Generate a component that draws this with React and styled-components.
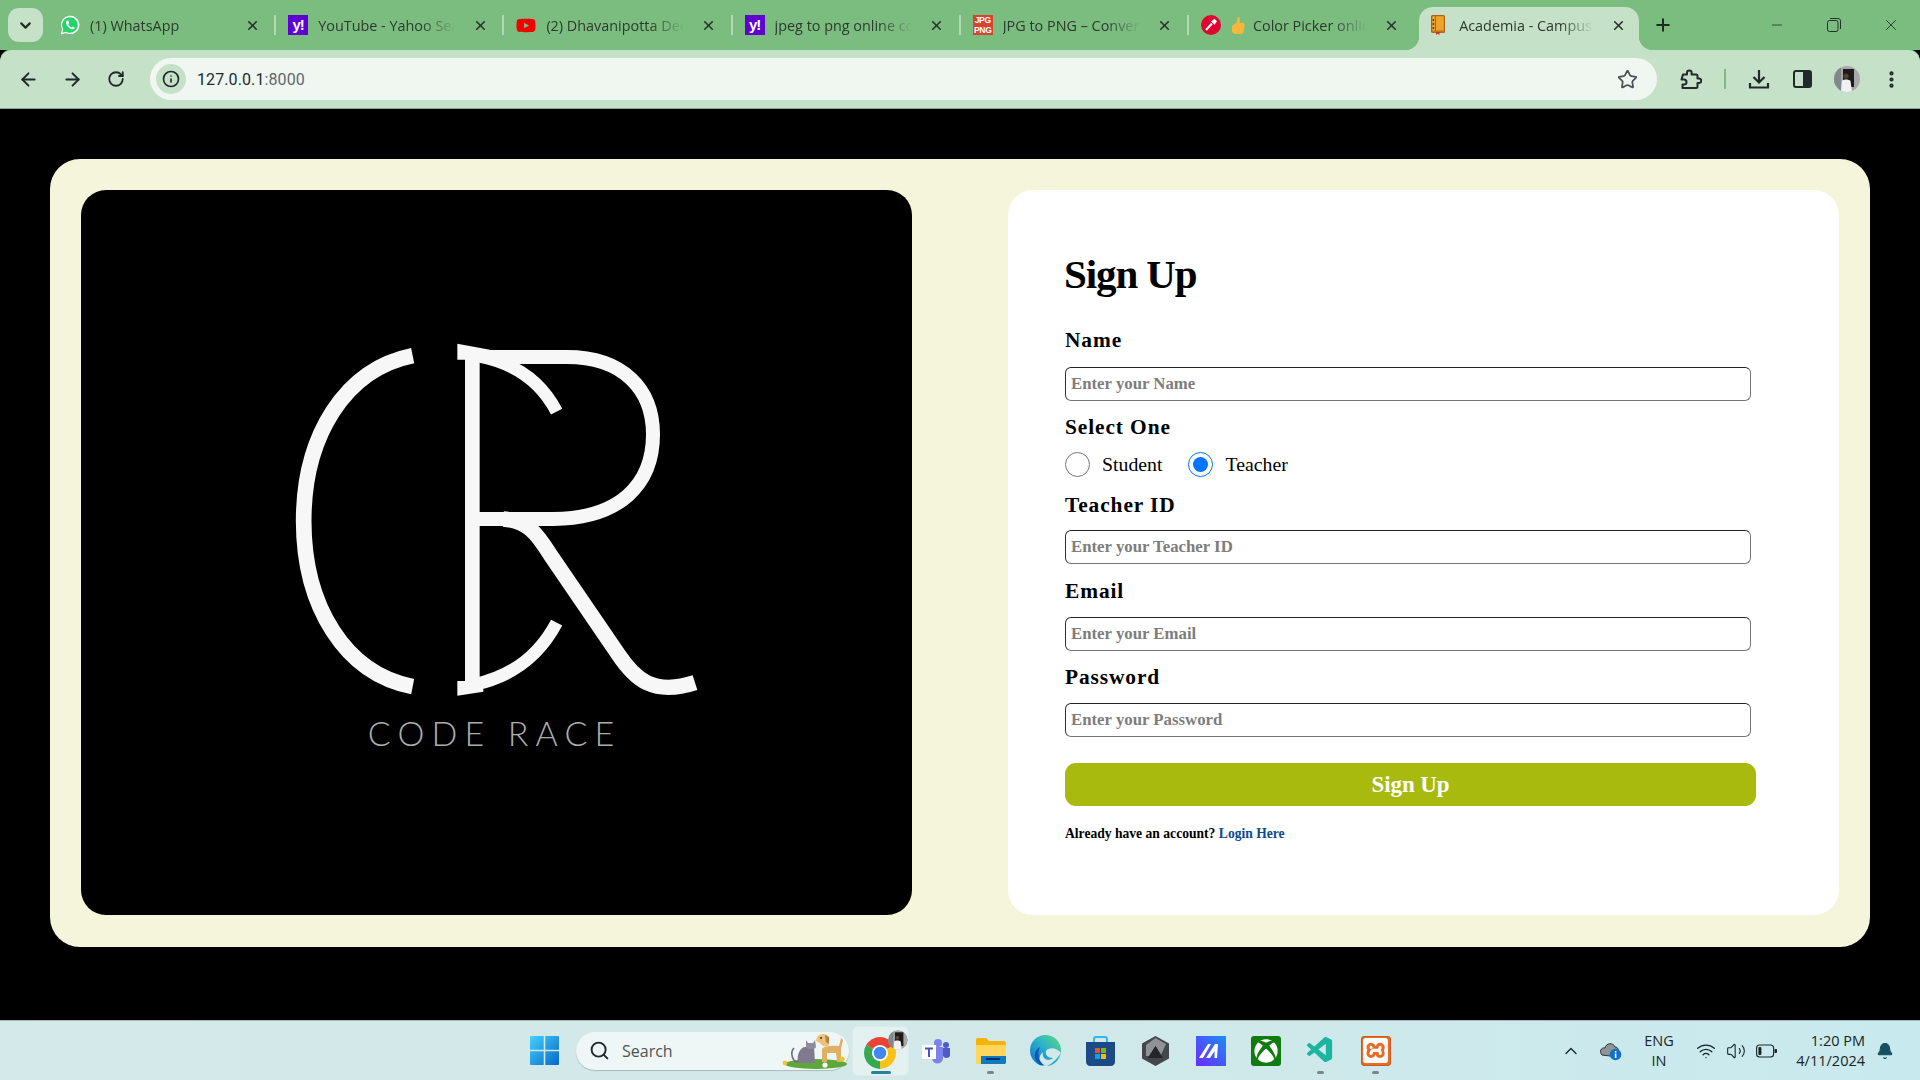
import React from "react";
import styled, { createGlobalStyle } from "styled-components";
import {
  ArrowLeft, ArrowRight, RotateCw, Info, Star, Plus, X, Minus, ChevronDown, ChevronUp,
  Search, Wifi, Volume2, MoreVertical, Bell,
} from "lucide-react";
import { SiXampp } from "react-icons/si";
import { FaYoutube, FaXbox } from "react-icons/fa";
import { VscVscode } from "react-icons/vsc";

const Global = createGlobalStyle`
  html, body { margin: 0; padding: 0; background: #000; }
  * { box-sizing: border-box; }
`;

const Screen = styled.div`
  width: 1920px; height: 1080px; display: flex; flex-direction: column; overflow: hidden;
  background: #000; font-family: "Open Sans", "Noto Sans", sans-serif;
`;

/* ---------- browser tab strip ---------- */
const TabStrip = styled.div`
  height: 50px; flex: none; display: flex; align-items: center; background: #7bbc7f;
  padding: 0 0 0 8px;
`;
const ExpandButton = styled.div`
  width: 35px; height: 34px; margin: 0 4px 0 0; border-radius: 11px; background: #c5e1c7;
  display: flex; align-items: center; justify-content: center; color: #1f2f22; flex: none;
`;
const Tab = styled.div`
  position: relative; flex: none; display: flex; align-items: center;
  width: ${(p) => (p.$active ? "220px" : "228.2px")};
  height: ${(p) => (p.$active ? "43px" : "34px")};
  padding: ${(p) => (p.$active ? "0 12px 7px 9px" : p.$last ? "0 16px 0 13px" : "0 14px 0 13px")};
  margin-left: ${(p) => (p.$active ? "3px" : "0")};
  align-self: ${(p) => (p.$active ? "flex-end" : "center")};
  background: ${(p) => (p.$active ? "#c5e1c7" : "transparent")};
  border-radius: ${(p) => (p.$active ? "14px 14px 0 0" : "0")};
  &::after {
    content: "";
    display: ${(p) => (p.$last || p.$active ? "none" : "block")};
    position: absolute; right: -1px; top: 7px; width: 2px; height: 20px; background: #b4d7b6;
  }
`;
const TabFlare = styled.span`
  position: absolute; bottom: 0; width: 14px; height: 14px;
  ${(p) => (p.$side === "left" ? "left: -14px;" : "right: -14px;")}
  background: radial-gradient(circle at ${(p) => (p.$side === "left" ? "0 0" : "100% 0")}, transparent 14px, #c5e1c7 14.5px);
`;
const Favicon = styled.span`
  width: 20px; height: 20px; flex: none; display: flex; align-items: center; justify-content: center;
`;
const TabTitle = styled.span`
  flex: 1; min-width: 0; display: flex; align-items: center; margin: 1px 10px 0 ${(p) => (p.$active ? "11px" : "10px")};
  font-size: 14.4px; color: #2d3a2e; white-space: nowrap; overflow: hidden;
  -webkit-mask-image: linear-gradient(to right, #000 72%, transparent 96%);
  mask-image: linear-gradient(to right, #000 72%, transparent 96%);
`;
const TabClose = styled.span`
  width: 18px; height: 18px; flex: none; display: flex; align-items: center; justify-content: center; color: #2a322b;
`;
const YahooTile = styled.span`
  width: 20px; height: 20px; background: #5f01d1; color: #fff; font: 700 15px/20px "Liberation Sans", sans-serif;
  text-align: center; letter-spacing: -1px; display: block;
`;
const JpgTile = styled.span`
  width: 20px; height: 20px; background: #d9442f; color: #fff; font: 700 8.5px/9.5px "Liberation Sans", sans-serif;
  text-align: center; display: block; padding-top: 1px; letter-spacing: -0.3px;
`;
const Thumb = styled.span`
  width: 16px; height: 20px; flex: none; margin: 0 7px 0 -1px; display: flex; align-items: center; justify-content: center;
`;
const NewTab = styled.div`
  width: 24px; height: 24px; margin-left: 12px; display: flex; align-items: center; justify-content: center; color: #1f2a20; flex: none;
`;
const WindowControls = styled.div`
  margin-left: auto; padding-right: 1px; display: flex; align-items: center; flex: none; color: #26302a;
`;
const WindowButton = styled.div`
  width: 57px; height: 30px; display: flex; align-items: center; justify-content: center;
`;

/* ---------- browser toolbar ---------- */
const Toolbar = styled.div`
  height: 59px; flex: none; display: flex; align-items: center; background: #c5e1c7;
  padding: 0 7px 0 6px; border-radius: 12px 12px 0 0;
  border-bottom: 1px solid #8fa592;
  box-shadow: 0 -1px 0 #7bbc7f;
`;
const ToolButton = styled.div`
  width: 44px; height: 44px; flex: none; display: flex; align-items: center; justify-content: center; color: #20292b;
`;
const AddressBar = styled.div`
  flex: 1; height: 42px; margin: 0 12px; border-radius: 21px; background: #f0f7f1;
  display: flex; align-items: center; padding: 0 19px 0 6px;
`;
const InfoBadge = styled.div`
  width: 30px; height: 30px; border-radius: 50%; background: #c5e1c7; color: #20292b; flex: none;
  display: flex; align-items: center; justify-content: center;
`;
const Url = styled.div`
  margin: 1px 0 0 11px; flex: 1; font: 400 16px "Roboto", sans-serif; color: #1c2b33; letter-spacing: 0.1px;
  & > span { color: #5d686c; }
`;
const ToolbarSeparator = styled.div`
  width: 24px; height: 20px; flex: none; display: flex; justify-content: center;
  &::before { content: ""; width: 2px; background: #7bbc7f; }
`;

/* ---------- page ---------- */
const Page = styled.main`
  flex: 1; min-height: 0; padding: 50px 50px 0; background: #000;
`;
const Card = styled.section`
  height: 788px; border-radius: 30px; background: #f5f5dc; padding: 31px 31px 32px;
  display: grid; grid-template-columns: 831px 831px; column-gap: 96px;
`;
const LogoPanel = styled.div`
  border-radius: 25px; background: #000; display: flex; align-items: center; justify-content: center;
  padding: 0 3px 24px 0;
`;
const FormPanel = styled.form`
  border-radius: 25px; background: #fff; padding: 59px 0 0 57px; display: flex; flex-direction: column; align-items: flex-start;
  font-family: "Liberation Serif", "Times New Roman", serif;
`;
const Title = styled.h1`
  margin: 0 0 28px -1px; font: 700 41px/50px "Liberation Serif", serif; color: #000; letter-spacing: -1.1px;
`;
const FieldLabel = styled.label`
  display: block; font: 700 21.4px/26px "Liberation Serif", serif; color: #000; letter-spacing: 0.9px;
  margin-bottom: ${(p) => p.$gap ?? 13}px;
`;
const TextInput = styled.input`
  display: block; width: 686px; height: 34px; padding: 0 5px; border-radius: 6px; outline: none;
  margin-bottom: ${(p) => p.$after ?? 13}px;
  border: 1.5px solid #767676; border-top-color: #222; border-left-color: #333; background: #fff;
  font: 700 16.8px "Liberation Serif", serif; color: #111;
  &::placeholder { color: #7d7d7d; opacity: 1; }
`;
const RadioRow = styled.div`
  display: flex; align-items: center; height: 25px; margin-bottom: 15px; margin-top: -1px;
`;
const Radio = styled.input`
  width: 25px; height: 25px; margin: 0 12px 0 0; accent-color: #0075ff; flex: none;
`;
const RadioText = styled.label`
  font: 400 19.8px "Liberation Serif", serif; color: #000; margin-right: 26px;
`;
const SubmitButton = styled.button`
  width: 691px; height: 43px; margin-top: 13px; border: none; border-radius: 11px; background: #a8ba0e; color: #fff;
  font: 700 23px "Liberation Serif", serif; letter-spacing: -0.1px; padding: 0;
`;
const LoginNote = styled.p`
  margin: 19px 0 0; font: 700 13.6px/18px "Liberation Serif", serif; color: #000;
`;
const LoginLink = styled.a`
  color: #0b4b8f; text-decoration: none;
`;

/* ---------- taskbar ---------- */
const Taskbar = styled.footer`
  height: 60px; flex: none; display: flex; align-items: center; padding-left: 517px;
  background: linear-gradient(90deg, #d3e9ea 0%, #d3e8e8 45%, #c8eaee 100%);
  border-top: 1px solid #a9b8b8;
`;
const TaskSlot = styled.div`
  position: relative; width: 55px; height: 48px; flex: none; display: flex; align-items: center; justify-content: center;
  ${(p) => p.$active && "background: #e3f1f1; border-radius: 5px; box-shadow: 0 0 0 1px #dcebeb;"}
  &::after {
    content: "";
    display: ${(p) => (p.$active || p.$dot ? "block" : "none")};
    position: absolute; left: 50%; bottom: 1px; height: 3px; border-radius: 2px;
    width: ${(p) => (p.$active ? "20px" : "7px")}; margin-left: ${(p) => (p.$active ? "-10px" : "-3.5px")};
    background: ${(p) => (p.$active ? "#26839a" : "#7c8586")};
  }
`;
const SearchPill = styled.div`
  width: 273px; height: 38px; margin: 0 4px; flex: none; border-radius: 19px; background: #eff7f6;
  box-shadow: 0 1px 1px #a9bcbc; display: flex; align-items: center; padding: 0 2px 0 13px; color: #1f2a2c;
`;
const SearchText = styled.span`
  flex: 1; margin-left: 12px; font-size: 16px; color: #4c5556;
`;
const Tray = styled.div`
  margin-left: auto; display: flex; align-items: center; height: 100%; padding-right: 15px; color: #1b2528;
`;
const TrayIcon = styled.span`
  width: ${(p) => p.$w || 30}px; flex: none; display: flex; align-items: center; justify-content: center;
  margin-left: ${(p) => p.$before || 0}px;
`;
const Lang = styled.div`
  width: 50px; margin: 0 7px 0 8px; text-align: center; font-size: 14.5px; line-height: 20px; color: #1b2528;
`;
const Clock = styled.div`
  width: 84px; text-align: right; font-size: 14.5px; line-height: 20px; color: #1b2528;
`;

/* ---------- drawings ---------- */
const LogoSvg = styled.svg`
  width: 450px; height: 440px; display: block;
`;
const CodeRace = styled.text`
  font: 300 102px "Lato", sans-serif; fill: #adadad;
`;

const Logo = () => (
  <LogoSvg viewBox="0 0 1350 1320">
    <g fill="none" stroke="#f7f7f7" strokeLinecap="butt">
      <path strokeWidth="47" d="M428 104C225 145 101 345 101 600C101 855 225 1058 428 1097" />
      <path strokeWidth="44" d="M607 90V1110" />
      <path strokeWidth="42" d="M650 108H890C1060 108 1149 205 1149 340C1149 490 1050 592 850 594H610" />
      <path strokeWidth="46" d="M700 594C785 600 810 655 850 715L1045 1000C1095 1075 1150 1125 1275 1085" />
      <path strokeWidth="38" d="M625 105C730 125 810 175 860 272" />
      <path strokeWidth="38" d="M860 905C810 1000 730 1065 615 1090" />
    </g>
    <path fill="#f7f7f7" d="M562 68L660 86V125L590 116H562ZM562 1080H640V1112L562 1124Z" />
    <CodeRace x="293" y="1275" textLength="740" lengthAdjust="spacing">CODE RACE</CodeRace>
  </LogoSvg>
);

const WhatsAppIcon = () => (
  <svg width="20" height="20" viewBox="0 0 20 20">
    <path d="M.8 19.4L2.2 14.4A9.2 9.2 0 1 1 5.7 17.9Z" fill="#fff" />
    <path d="M2.4 17.8L3.3 14.2A7.8 7.8 0 1 1 6 16.8Z" fill="#25d366" />
    <path d="M7.3 5.4C6.2 6 5.6 7.3 6.2 9C7 11.2 9 13.4 11.5 14.2C13 14.7 14.4 14 14.8 12.7L13 11.5L11.9 12.6C10.3 12 8.9 10.6 8.3 9L9.2 7.9L8.3 5.6Z" fill="#fff" />
  </svg>
);
const Dropper = () => (
  <svg width="20" height="20" viewBox="0 0 20 20">
    <circle cx="10" cy="10" r="10" fill="#e0062f" />
    <path d="M5 15L11 8.5" stroke="#fff" strokeWidth="2" />
    <path d="M10 6.5L13.5 3.8L16 6.3L13.5 9.8Z" fill="#fff" />
  </svg>
);
const ThumbsUp = () => (
  <svg width="14" height="20" viewBox="0 0 14 20">
    <path d="M4 8C6 6 6.5 4 6.5 2C6.5.5 9 .5 9 3C9 5 8.5 6 8.5 7H12.5C14 7 14 9 13.5 10L12.5 16C12 17.5 11 18 9.5 18H5C3 18 1 17 1 15V11C1 9 2.5 9 4 8Z" fill="#f6b73c" />
  </svg>
);
const BookIcon = () => (
  <svg width="14" height="20" viewBox="0 0 14 20">
    <rect x=".6" y=".6" width="12.8" height="16.8" rx="1" fill="#f0a52a" stroke="#a9631a" strokeWidth="1.2" />
    <rect x="4" y="1" width="1" height="16" fill="#a9631a" />
    <circle cx="2.4" cy="5" r="1" fill="#6d3d10" /><circle cx="2.4" cy="9" r="1" fill="#6d3d10" /><circle cx="2.4" cy="13" r="1" fill="#6d3d10" />
    <rect x=".6" y="15.5" width="12.8" height="2" fill="#c4701c" />
    <path d="M5 17H8.5V20L6.7 18.8L5 20Z" fill="#c0392b" />
  </svg>
);
const RestoreIcon = () => (
  <svg width="14" height="14" viewBox="0 0 14 14" fill="none" stroke="currentColor" strokeWidth="1">
    <rect x=".5" y="2.5" width="10.5" height="11" rx="2" />
    <path d="M3 .5H11C12.5 .5 13.5 1.5 13.5 3V11" />
  </svg>
);
const PuzzleIcon = () => (
  <svg width="22" height="22" viewBox="0 0 22 22" fill="none" stroke="currentColor" strokeWidth="2" strokeLinejoin="round">
    <path d="M3 6.5H7V4.8A2.3 2.3 0 0 1 11.6 4.8V6.5H16A1.5 1.5 0 0 1 17.5 8V10.5H19A2.2 2.2 0 0 1 19 15H17.5V18.5A1.5 1.5 0 0 1 16 20H2.5V16.5H4A2.5 2.5 0 0 0 4 11.5H1.5L3 6.5Z" />
  </svg>
);
const DownloadIcon = () => (
  <svg width="22" height="22" viewBox="0 0 22 22" fill="none" stroke="currentColor" strokeWidth="2.2">
    <path d="M11 2V14M5.5 9L11 14.5L16.5 9" />
    <path d="M2 15V19.5H20V15" />
  </svg>
);
const SidePanelIcon = () => (
  <svg width="20" height="20" viewBox="0 0 20 20">
    <rect x="1" y="2" width="17" height="16" rx="2" fill="none" stroke="currentColor" strokeWidth="2" />
    <rect x="10" y="2" width="8" height="16" fill="currentColor" />
  </svg>
);
const Avatar = ({ size = 26 }) => (
  <svg width={size} height={size} viewBox="0 0 26 26">
    <clipPath id={`av${size}`}><circle cx="13" cy="13" r="13" /></clipPath>
    <g clipPath={`url(#av${size})`}>
      <rect width="26" height="26" fill="#a8a8a8" />
      <rect x="9" y="3" width="11" height="18" fill="#1b1b1b" />
      <rect x="0" y="0" width="7" height="26" fill="#7f8a8c" />
      <circle cx="12" cy="10" r="2.6" fill="#5a4030" />
      <path d="M7 26L8 15C9 13 15 13 16.5 15L18 26Z" fill="#f1f1f1" />
    </g>
  </svg>
);
const WinLogo = () => (
  <svg width="29" height="29" viewBox="0 0 29 29">
    <defs>
      <linearGradient id="win" x1="0" y1="0" x2="1" y2="1"><stop offset="0" stopColor="#44d1fb" /><stop offset="1" stopColor="#0668c9" /></linearGradient>
    </defs>
    <path fill="url(#win)" d="M1 0H13.7V13.7H0V1A1 1 0 0 1 1 0ZM15.3 0H28A1 1 0 0 1 29 1V13.7H15.3ZM0 15.3H13.7V29H1A1 1 0 0 1 0 28ZM15.3 15.3H29V28A1 1 0 0 1 28 29H15.3Z" />
  </svg>
);
const Pets = () => (
  <svg width="66" height="38" viewBox="0 0 66 38">
    <ellipse cx="35" cy="32" rx="31" ry="5" fill="#5da83a" />
    <path d="M13 16C9 20 11 30 17 30" fill="none" stroke="#6f6a78" strokeWidth="1.6" />
    <path d="M17 31C15 22 20 15 24 15L33 14L34 31Z" fill="#7f7a8e" />
    <path d="M25 8L27 11H32L34 8L35 15C34 18 26 18 25 15Z" fill="#8f8a9e" />
    <path d="M41 30V17C42 14 52 13 58 14L60 6L62 8L60 17L60 30H56L55 21H46V30Z" fill="#e0b063" />
    <path d="M36 5C38 1 47 1 47 5L48 13C45 16 41 14 39 11L35 9Z" fill="#ecc27a" />
    <path d="M44 3L48 5L48 12L45 10Z" fill="#b97f3c" />
    <circle cx="40" cy="6" r=".9" fill="#222" />
    <circle cx="4" cy="31" r="2.4" fill="#f4c430" /><circle cx="61" cy="27" r="2.6" fill="#f4c430" /><circle cx="44" cy="33" r="2.6" fill="#fff" />
  </svg>
);
const Chrome = () => (
  <svg width="32" height="32" viewBox="4 4 40 40">
    <path fill="#ea4335" d="M24 24L6.68 14A20 20 0 0 1 41.32 14Z" />
    <path fill="#fbc116" d="M24 24L41.32 14A20 20 0 0 1 24 44Z" />
    <path fill="#34a853" d="M24 24L24 44A20 20 0 0 1 6.68 14Z" />
    <circle cx="24" cy="24" r="10" fill="#fff" /><circle cx="24" cy="24" r="7.8" fill="#4285f4" />
  </svg>
);
const ChromeWrap = styled.span`
  position: relative; display: flex; width: 32px; height: 32px; top: 2px; left: -1px;
`;
const ChromeBadge = styled.span`
  position: absolute; top: -7px; right: -12px; display: flex; border-radius: 50%; overflow: hidden;
`;
const Teams = () => (
  <svg width="28" height="26" viewBox="0 0 28 26">
    <circle cx="16" cy="5" r="4" fill="#7b83eb" /><circle cx="24" cy="7" r="3" fill="#5059c9" />
    <path d="M10 9H21V20A5.5 5.5 0 0 1 10 20Z" fill="#7b83eb" />
    <path d="M21 10H28V18A4 4 0 0 1 21 18Z" fill="#5059c9" />
    <rect x="0" y="7" width="14" height="14" fill="#fff" />
    <path d="M3 9.5H11V11.5H8V19H6V11.5H3Z" fill="#4b53bc" />
  </svg>
);
const Folder = () => (
  <svg width="30" height="28" viewBox="0 0 30 28">
    <path d="M0 3C0 1.5 1 1 2 1H10L13 4H28C29 4 30 5 30 6V25C30 26.5 29 27 28 27H2C1 27 0 26.5 0 25Z" fill="#f4b400" />
    <path d="M0 8H30V25C30 26.5 29 27 28 27H2C1 27 0 26.5 0 25Z" fill="#ffd65c" />
    <path d="M5 19H30V25C30 26.5 29 27 28 27H5Z" fill="#0e7ac4" />
    <rect x="10" y="21" width="14" height="2" fill="#052f5f" />
  </svg>
);
const Edge = () => (
  <svg width="31" height="31" viewBox="0 0 31 31">
    <defs>
      <linearGradient id="edgeA" x1="1" y1="0" x2="0" y2="1"><stop offset="0" stopColor="#5fdc7a" /><stop offset=".45" stopColor="#2cb4c8" /><stop offset="1" stopColor="#0a6fd0" /></linearGradient>
    </defs>
    <circle cx="15.5" cy="15.5" r="15.5" fill="url(#edgeA)" />
    <path d="M31 18C27 24 20 31 16 31C9 31 7 22 13 17C11 24 19 27 23 23C18 23 15 20 16 16C18 12 27 12 31 18Z" fill="#d2e8e9" />
    <path d="M10 30C3 25 3 15 10 12C7 18 8 26 14 30Z" fill="#0b57b5" />
  </svg>
);
const Store = () => (
  <svg width="29" height="30" viewBox="0 0 29 30">
    <path d="M8 6V3C8 1.8 9 1 10 1H19C20 1 21 1.8 21 3V6" fill="none" stroke="#36b6ef" strokeWidth="2" />
    <path d="M0 6H29V26C29 28 27 30 25 30H4C2 30 0 28 0 26Z" fill="#1c4a86" />
    <rect x="9" y="12" width="5" height="5" fill="#f25022" /><rect x="15" y="12" width="5" height="5" fill="#7fba00" />
    <rect x="9" y="18" width="5" height="5" fill="#00a4ef" /><rect x="15" y="18" width="5" height="5" fill="#ffb900" />
  </svg>
);
const Hex = () => (
  <svg width="27" height="30" viewBox="0 0 27 30">
    <path d="M13.5 0L27 7.5V22.5L13.5 30L0 22.5V7.5Z" fill="#43464b" />
    <path d="M13.5 2L24 8L19 19L13.5 10L7 20H4V9Z" fill="#8f9297" />
    <path d="M13.5 10L21 22H6Z" fill="#23252a" />
  </svg>
);
const BlueM = () => (
  <svg width="30" height="30" viewBox="0 0 30 30">
    <defs>
      <linearGradient id="bm" x1="1" y1="0" x2="0" y2="1"><stop offset="0" stopColor="#1d8cf4" /><stop offset="1" stopColor="#6a2bff" /></linearGradient>
    </defs>
    <rect width="30" height="30" fill="url(#bm)" />
    <path d="M3 22L12 8H15L7 22ZM10 22L19 8H22L21 22H18.5L18.6 15L14 22Z" fill="#fff" />
  </svg>
);
const XboxTile = styled.span`
  width: 30px; height: 30px; border-radius: 3px; background: #107c10; color: #fff; display: flex; align-items: center; justify-content: center;
`;
const XamppTile = styled.span`
  width: 30px; height: 30px; border-radius: 4px; background: #ea6b25; color: #fff; display: flex; align-items: center; justify-content: center;
  box-shadow: inset 0 0 0 1px #c85a1e;
`;
const CloudInfo = () => (
  <svg width="22" height="20" viewBox="0 0 22 20">
    <path d="M2 14C-1 11 1 6 5 7C6 2 13 1 15 6C18 6 19 9 18 12L10 15Z" fill="#8d9597" stroke="#2a3234" strokeWidth="1" />
    <circle cx="15.5" cy="13.5" r="5.8" fill="#1170c9" />
    <rect x="14.8" y="12.5" width="1.6" height="4.5" fill="#fff" /><rect x="14.8" y="10" width="1.6" height="1.6" fill="#fff" />
  </svg>
);
const Battery = () => (
  <svg width="21" height="14" viewBox="0 0 21 14">
    <rect x=".6" y="1" width="17" height="12" rx="3" fill="none" stroke="currentColor" strokeWidth="1.1" />
    <rect x="2.4" y="3" width="3" height="8" rx="1" fill="currentColor" />
    <path d="M18.5 5H20C20.6 5 21 5.5 21 6V8C21 8.5 20.6 9 20 9H18.5Z" fill="currentColor" />
  </svg>
);
const BellFilled = styled(Bell)`
  fill: #17505f; color: #17505f;
`;

const tabs = [
  { title: "(1) WhatsApp", icon: <WhatsAppIcon /> },
  { title: "YouTube - Yahoo Search Results", icon: <YahooTile>y!</YahooTile> },
  { title: "(2) Dhavanipotta Deepak", icon: <FaYoutube size={21} color="#f40000" /> },
  { title: "jpeg to png online converter", icon: <YahooTile>y!</YahooTile> },
  { title: "JPG to PNG – Convert images", icon: <JpgTile>JPG PNG</JpgTile> },
  { title: "Color Picker online", icon: <Dropper />, thumb: true, last: true },
];

const fields = [
  { id: "teacher", label: "Teacher ID", placeholder: "Enter your Teacher ID", gap: 12, after: 14 },
  { id: "email", label: "Email", placeholder: "Enter your Email" },
  { id: "password", label: "Password", placeholder: "Enter your Password" },
];

export default function App() {
  return (
    <Screen>
      <Global />
      <TabStrip>
        <ExpandButton><ChevronDown size={17} strokeWidth={3} /></ExpandButton>
        {tabs.map((t) => (
          <Tab key={t.title} $last={t.last}>
            <Favicon>{t.icon}</Favicon>
            <TabTitle>
              {t.thumb && <Thumb><ThumbsUp /></Thumb>}
              {t.title}
            </TabTitle>
            <TabClose><X size={15} strokeWidth={2.6} /></TabClose>
          </Tab>
        ))}
        <Tab $active>
          <TabFlare $side="left" />
          <Favicon><BookIcon /></Favicon>
          <TabTitle $active>Academia - Campus Portal</TabTitle>
          <TabClose><X size={15} strokeWidth={2.6} /></TabClose>
          <TabFlare $side="right" />
        </Tab>
        <NewTab><Plus size={20} strokeWidth={2.4} /></NewTab>
        <WindowControls>
          <WindowButton><Minus size={16} strokeWidth={1.2} /></WindowButton>
          <WindowButton><RestoreIcon /></WindowButton>
          <WindowButton><X size={18} strokeWidth={1.2} /></WindowButton>
        </WindowControls>
      </TabStrip>

      <Toolbar>
        <ToolButton><ArrowLeft size={21} strokeWidth={2.2} /></ToolButton>
        <ToolButton><ArrowRight size={21} strokeWidth={2.2} /></ToolButton>
        <ToolButton><RotateCw size={18} strokeWidth={2.4} /></ToolButton>
        <AddressBar>
          <InfoBadge><Info size={18} strokeWidth={2.2} /></InfoBadge>
          <Url>127.0.0.1<span>:8000</span></Url>
          <Star size={21} strokeWidth={2} color="#4a5356" />
        </AddressBar>
        <ToolButton><PuzzleIcon /></ToolButton>
        <ToolbarSeparator />
        <ToolButton><DownloadIcon /></ToolButton>
        <ToolButton><SidePanelIcon /></ToolButton>
        <ToolButton><Avatar /></ToolButton>
        <ToolButton><MoreVertical size={21} strokeWidth={2.8} /></ToolButton>
      </Toolbar>

      <Page>
        <Card>
          <LogoPanel><Logo /></LogoPanel>
          <FormPanel onSubmit={(e) => e.preventDefault()}>
            <Title>Sign Up</Title>
            <FieldLabel htmlFor="name" $gap={14}>Name</FieldLabel>
            <TextInput id="name" placeholder="Enter your Name" />
            <FieldLabel>Select One</FieldLabel>
            <RadioRow>
              <Radio type="radio" id="student" name="role" />
              <RadioText htmlFor="student">Student</RadioText>
              <Radio type="radio" id="teacher-role" name="role" defaultChecked />
              <RadioText htmlFor="teacher-role">Teacher</RadioText>
            </RadioRow>
            {fields.map((f) => (
              <React.Fragment key={f.id}>
                <FieldLabel htmlFor={f.id} $gap={f.gap}>{f.label}</FieldLabel>
                <TextInput id={f.id} placeholder={f.placeholder} $after={f.after} />
              </React.Fragment>
            ))}
            <SubmitButton type="submit">Sign Up</SubmitButton>
            <LoginNote>Already have an account? <LoginLink href="#login">Login Here</LoginLink></LoginNote>
          </FormPanel>
        </Card>
      </Page>

      <Taskbar>
        <TaskSlot><WinLogo /></TaskSlot>
        <SearchPill>
          <Search size={21} strokeWidth={2.2} />
          <SearchText>Search</SearchText>
          <Pets />
        </SearchPill>
        <TaskSlot $active>
          <ChromeWrap>
            <Chrome />
            <ChromeBadge><Avatar size={20} /></ChromeBadge>
          </ChromeWrap>
        </TaskSlot>
        <TaskSlot><Teams /></TaskSlot>
        <TaskSlot $dot><Folder /></TaskSlot>
        <TaskSlot><Edge /></TaskSlot>
        <TaskSlot><Store /></TaskSlot>
        <TaskSlot><Hex /></TaskSlot>
        <TaskSlot><BlueM /></TaskSlot>
        <TaskSlot><XboxTile><FaXbox size={24} /></XboxTile></TaskSlot>
        <TaskSlot $dot><VscVscode size={31} color="#1cb5a0" /></TaskSlot>
        <TaskSlot $dot><XamppTile><SiXampp size={25} /></XamppTile></TaskSlot>
        <Tray>
          <TrayIcon><ChevronUp size={20} strokeWidth={1.6} /></TrayIcon>
          <TrayIcon $before={10}><CloudInfo /></TrayIcon>
          <Lang>ENG<br />IN</Lang>
          <TrayIcon><Wifi size={20} strokeWidth={1.6} /></TrayIcon>
          <TrayIcon><Volume2 size={20} strokeWidth={1.3} /></TrayIcon>
          <TrayIcon><Battery /></TrayIcon>
          <Clock>1:20 PM<br />4/11/2024</Clock>
          <TrayIcon $w={40}><BellFilled size={18} strokeWidth={1.5} /></TrayIcon>
        </Tray>
      </Taskbar>
    </Screen>
  );
}
